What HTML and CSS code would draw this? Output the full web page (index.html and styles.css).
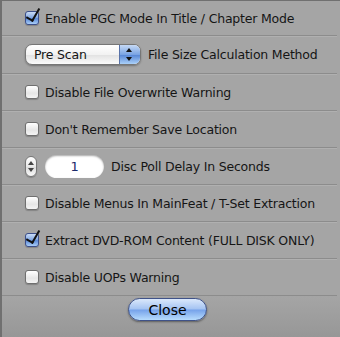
FILE: index.html
```html
<!DOCTYPE html>
<html lang="en">
<head>
    <meta charset="UTF-8">
    <title>Preferences</title>
    <link rel="stylesheet" href="styles.css">
</head>
<body>
<div class="panel">
    <div class="row first">
        <label class="check"><span class="box on"></span>Enable PGC Mode In Title / Chapter Mode</label>
    </div>
    <div class="row tall">
        <div class="popup"><span class="popup-text">Pre Scan</span><span class="popup-arrows"></span></div>
        <span class="label">File Size Calculation Method</span>
    </div>
    <div class="row">
        <label class="check"><span class="box"></span>Disable File Overwrite Warning</label>
    </div>
    <div class="row">
        <label class="check"><span class="box"></span>Don't Remember Save Location</label>
    </div>
    <div class="row">
        <span class="stepper"><i class="up"></i><i class="down"></i></span>
        <span class="field">1</span>
        <span class="label">Disc Poll Delay In Seconds</span>
    </div>
    <div class="row">
        <label class="check"><span class="box"></span>Disable Menus In MainFeat / T-Set Extraction</label>
    </div>
    <div class="row">
        <label class="check"><span class="box on"></span>Extract DVD-ROM Content (FULL DISK ONLY)</label>
    </div>
    <div class="row last">
        <label class="check"><span class="box"></span>Disable UOPs Warning</label>
    </div>
    <div class="footer">
        <button class="close">Close</button>
    </div>
</div>
</body>
</html>
```

FILE: styles.css
```css
html, body {
    margin: 0;
    padding: 0;
    background: #a5a5a5;
}
.panel {
    width: 340px;
    height: 337px;
    box-sizing: border-box;
    border-left: 2px solid #707070;
    border-top: 1px solid #707070;
    background: #a5a5a5;
    font: 12.5px "DejaVu Sans", sans-serif;
    letter-spacing: -0.2px;
    color: #151515;
    display: flex;
    flex-direction: column;
}
.row {
    height: 37px;
    flex: none;
    box-sizing: border-box;
    margin-right: 3px;
    padding-left: 23px;
    display: flex;
    align-items: center;
    border-bottom: 1px solid #8c8c8c;
    box-shadow: 0 1px 0 #b0b0b0;
}
.row.first {
    height: 35px;
}
.row.tall {
    height: 38px;
}
.check {
    display: flex;
    align-items: center;
}
.box {
    position: relative;
    width: 14px;
    height: 14px;
    margin-right: 6px;
    border: 1px solid #6f6f6f;
    border-radius: 3px;
    background: linear-gradient(#fff, #e6e6e6 60%, #f4f4f4);
    box-sizing: border-box;
    box-shadow: 0 1px 1px rgba(0,0,0,0.2);
}
.box.on {
    border-color: #3c4f8a;
    background: linear-gradient(#cadcf6, #7ea6e3 50%, #5b8ad8 55%, #a9cdf7);
}
.box.on::after {
    content: "";
    position: absolute;
    left: 3px;
    top: -6px;
    width: 6px;
    height: 13px;
    border-right: 2.5px solid #111;
    border-bottom: 2.5px solid #111;
    transform: rotate(30deg);
}
.label {
    margin-left: 7px;
}
.popup {
    width: 116px;
    height: 21px;
    box-sizing: border-box;
    border: 1px solid #767676;
    border-radius: 7px;
    background: linear-gradient(#fff, #f2f2f2 50%, #e3e3e3 55%, #fbfbfb);
    display: flex;
    align-items: center;
    overflow: hidden;
    box-shadow: 0 1px 2px rgba(0,0,0,0.3);
}
.popup-text {
    flex: 1;
    padding-left: 8px;
}
.popup-arrows {
    position: relative;
    width: 20px;
    height: 100%;
    background: linear-gradient(#c5d9f5, #7aa4e4 50%, #5b8ad8 55%, #aad0f8);
    border-left: 1px solid #5872a8;
}
.popup-arrows::before,
.popup-arrows::after {
    content: "";
    position: absolute;
    left: 6px;
    border-left: 3.5px solid transparent;
    border-right: 3.5px solid transparent;
}
.popup-arrows::before {
    top: 3px;
    border-bottom: 4px solid #111;
}
.popup-arrows::after {
    bottom: 3px;
    border-top: 4px solid #111;
}
.stepper {
    position: relative;
    width: 12px;
    height: 21px;
    box-sizing: border-box;
    border: 1px solid #777;
    border-radius: 6px;
    background: linear-gradient(#fff, #e9e9e9 50%, #dcdcdc 52%, #f8f8f8);
    box-shadow: 0 1px 1px rgba(0,0,0,0.2);
}
.stepper i {
    position: absolute;
    left: 2px;
    border-left: 3px solid transparent;
    border-right: 3px solid transparent;
}
.stepper .up {
    top: 4px;
    border-bottom: 4px solid #444;
}
.stepper .down {
    bottom: 4px;
    border-top: 4px solid #444;
}
.field {
    margin-left: 8px;
    width: 59px;
    height: 23px;
    border-radius: 12px;
    background: #fff;
    box-shadow: inset 0 1px 2px rgba(0,0,0,0.35);
    display: flex;
    align-items: center;
    justify-content: center;
    font-size: 13px;
    color: #1c2a6b;
}
.footer {
    flex: 1;
    display: flex;
    justify-content: center;
    padding-top: 2px;
    padding-right: 7px;
    background: linear-gradient(#a5a5a5, #979797);
}
.close {
    width: 79px;
    height: 23px;
    border: 1px solid #3f5288;
    border-radius: 12px;
    font: 14px "DejaVu Sans", sans-serif;
    color: #000;
    background: linear-gradient(#dbe8fb, #a4c3f2 48%, #76a2ea 52%, #b7dcfd);
    box-shadow: 0 1px 2px rgba(0,0,0,0.4);
    padding: 0;
}
```
